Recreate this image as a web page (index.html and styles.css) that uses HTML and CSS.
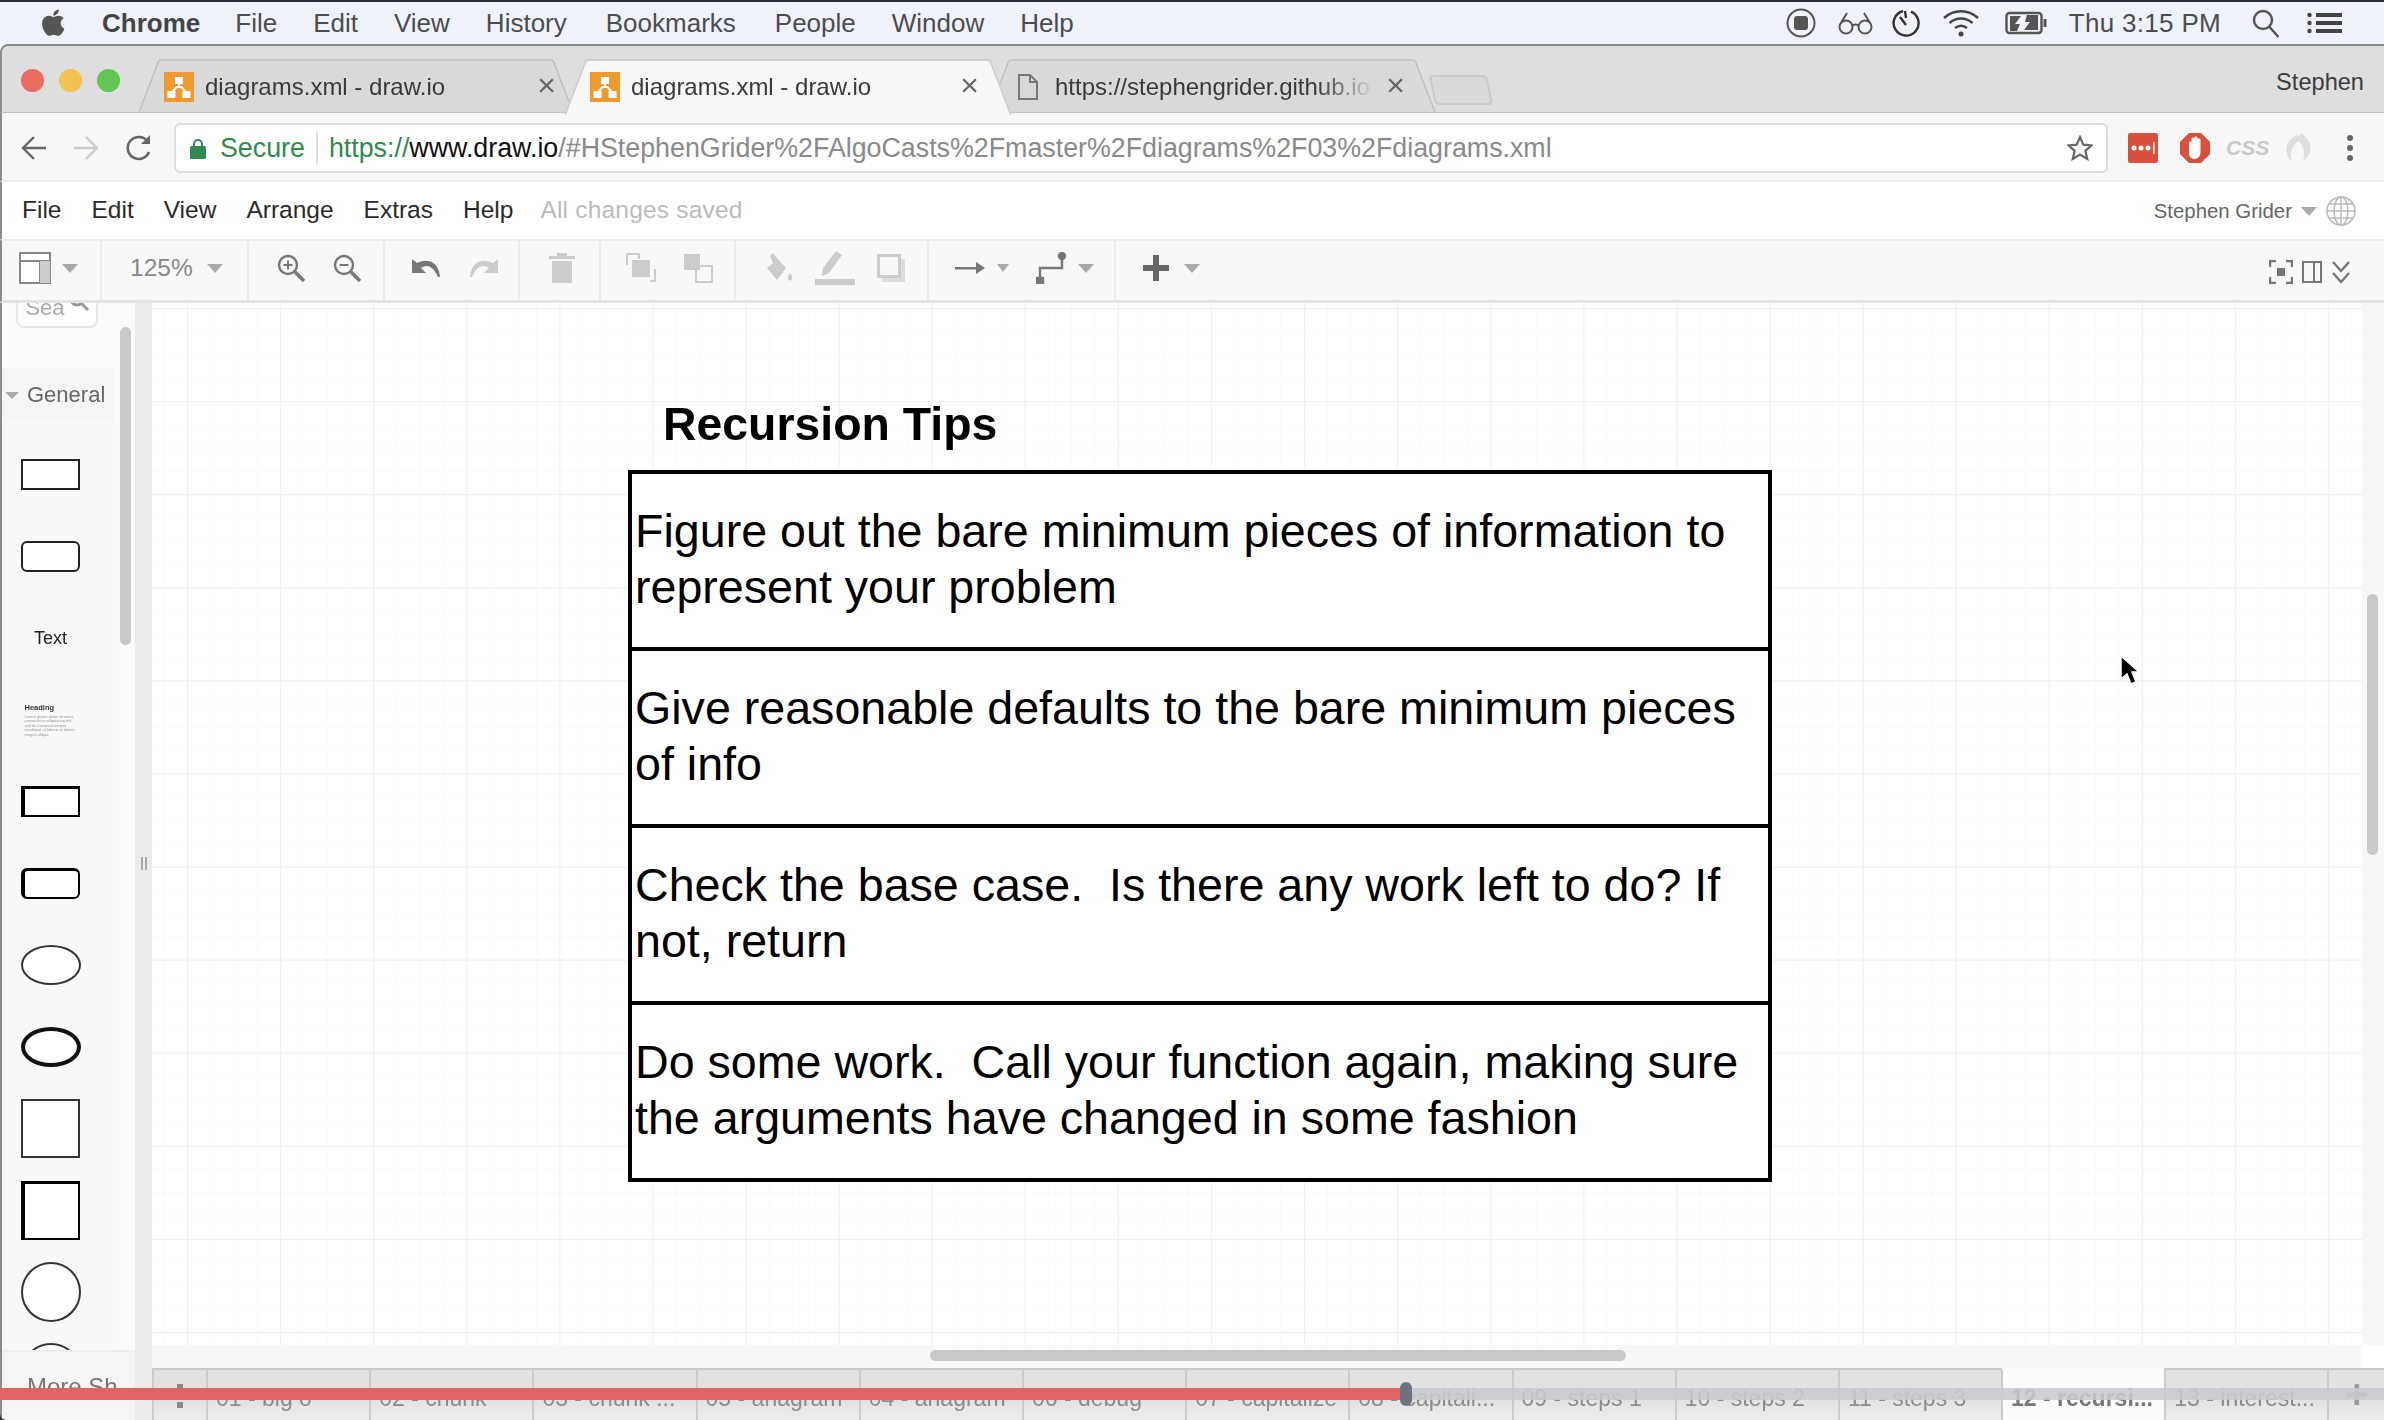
FILE: index.html
```html
<!DOCTYPE html>
<html lang="en">
<head>
<meta charset="UTF-8">
<title>diagrams.xml - draw.io</title>
<link rel="stylesheet" href="styles.css">
</head>
<body>
<div class="screen">

<!-- mac menu bar -->
<header class="menubar">
  <svg class="apple" viewBox="3 3 17 18.5" width="25" height="28"><path fill="#555" d="M17.05 20.28c-.98.95-2.05.8-3.08.35-1.09-.46-2.09-.48-3.24 0-1.44.62-2.2.44-3.06-.35C2.79 15.25 3.51 7.59 9.05 7.31c1.35.07 2.29.74 3.08.8 1.18-.24 2.31-.93 3.57-.84 1.51.12 2.65.72 3.4 1.8-3.12 1.87-2.38 5.98.48 7.13-.57 1.5-1.31 2.99-2.54 4.09zM12.03 7.25c-.15-2.23 1.66-4.07 3.74-4.25.29 2.58-2.34 4.5-3.74 4.25z"/></svg>
  <b class="mac-app">Chrome</b>
  <nav class="mac-menu">
    <span>File</span><span>Edit</span><span>View</span><span>History</span><span class="wide">Bookmarks</span><span class="wide">People</span><span>Window</span><span>Help</span>
  </nav>
  <div class="status">
    <svg width="30" height="30" viewBox="0 0 30 30"><circle cx="15" cy="15" r="13.5" fill="none" stroke="#555" stroke-width="2"/><rect x="8" y="8" width="14" height="14" rx="3" fill="#555"/></svg>
    <svg class="st-glasses" width="35" height="24" viewBox="0 0 35 24" fill="none" stroke="#555" stroke-width="2"><circle cx="8" cy="16" r="6.5"/><circle cx="27" cy="16" r="6.5"/><path d="M14 15c2-2 5-2 7 0M3 12L9 2M32 12L26 2"/></svg>
    <svg width="28" height="32" viewBox="0 0 28 32" fill="none" stroke="#333" stroke-width="2.4"><path d="M11 4a12.5 12.5 0 1 0 8 .6M13 4l1 7M8 10l6 8"/></svg>
    <svg width="38" height="28" viewBox="0 0 38 28" fill="none" stroke="#444" stroke-width="2.4"><path d="M2 9c10-9 24-9 34 0M7.500 14c7-6 16-6 23 0M13 19c4-3 8-3 12 0"/><circle cx="19" cy="25" r="2.500" fill="#444" stroke="none"/></svg>
    <svg class="st-battery" width="43" height="24" viewBox="0 0 43 24"><rect x="1.500" y="2" width="35" height="20" rx="3" fill="none" stroke="#555" stroke-width="2.400"/><rect x="38.500" y="8" width="3" height="8" fill="#555"/><path fill="#555" d="M5 5h11l-6 8h5l-3 7H5zM22 4h11v15H19l6-8h-5z"/></svg>
    <span class="clock">Thu 3:15 PM</span>
    <svg class="mac-search" width="28" height="30" viewBox="0 0 28 30" fill="none" stroke="#555" stroke-width="2.400"><circle cx="11" cy="12" r="9"/><path d="M17.500 19l9 10"/></svg>
    <svg class="mac-list" width="35" height="22" viewBox="0 0 35 22" fill="#444"><circle cx="2.500" cy="3" r="2.200"/><circle cx="2.500" cy="11" r="2.200"/><circle cx="2.500" cy="19" r="2.200"/><rect x="9" y="1" width="26" height="4"/><rect x="9" y="9" width="26" height="4"/><rect x="9" y="17" width="26" height="4"/></svg>
  </div>
</header>

<!-- chrome tab strip -->
<div class="tabstrip">
  <div class="lights"><i class="red"></i><i class="yellow"></i><i class="green"></i></div>
  <div class="tab first">
    <svg class="favicon" width="30" height="30" viewBox="0 0 30 30"><rect width="30" height="30" fill="#ee9a2e"/><path d="M15 10v5M7.500 21l5-6h5l5 6" fill="none" stroke="#fff" stroke-width="2"/><rect x="11" y="5" width="8" height="7" fill="#fff"/><rect x="3.500" y="19" width="8" height="7" fill="#fff"/><rect x="18.500" y="19" width="8" height="7" fill="#fff"/></svg>
    <span class="tab-title">diagrams.xml - draw.io</span>
    <span class="tab-close">×</span>
  </div>
  <div class="tab active">
    <svg class="favicon" width="30" height="30" viewBox="0 0 30 30"><rect width="30" height="30" fill="#ee9a2e"/><path d="M15 10v5M7.500 21l5-6h5l5 6" fill="none" stroke="#fff" stroke-width="2"/><rect x="11" y="5" width="8" height="7" fill="#fff"/><rect x="3.500" y="19" width="8" height="7" fill="#fff"/><rect x="18.500" y="19" width="8" height="7" fill="#fff"/></svg>
    <span class="tab-title">diagrams.xml - draw.io</span>
    <span class="tab-close">×</span>
  </div>
  <div class="tab third">
    <svg class="favicon" width="20" height="26" viewBox="0 0 20 26" fill="none" stroke="#777" stroke-width="2"><path d="M1 1h11l7 7v17H1zM12 1v7h7"/></svg>
    <span class="tab-title fade">https://stephengrider.github.io</span>
    <span class="tab-close">×</span>
  </div>
  <div class="newtab"></div>
  <span class="profile">Stephen</span>
</div>

<!-- address bar -->
<div class="addressbar">
  <svg class="nav-back" width="26" height="26" viewBox="0 0 26 26" fill="none" stroke="#666" stroke-width="2.400"><path d="M25 13H3M13 2L2 13l11 11"/></svg>
  <svg class="nav-forward" width="26" height="26" viewBox="0 0 26 26" fill="none" stroke="#ccc" stroke-width="2.400"><path d="M1 13h22M13 2l11 11-11 11"/></svg>
  <svg class="nav-reload" width="28" height="28" viewBox="0 0 28 28" fill="none" stroke="#666" stroke-width="2.600"><path d="M24 18a11 11 0 1 1-1-10"/><path d="M25 1v9h-9" fill="#666" stroke="none"/></svg>
  <div class="omnibox">
    <svg width="16" height="21" viewBox="0 0 16 21"><path d="M4 9V6a4 4 0 0 1 8 0v3" fill="none" stroke="#2f8a50" stroke-width="2"/><rect y="8" width="16" height="13" rx="1.500" fill="#2f8a50"/></svg>
    <span class="secure">Secure</span>
    <span class="url"><span class="url-green">https://</span><span class="url-host">www.draw.io</span>/#HStephenGrider%2FAlgoCasts%2Fmaster%2Fdiagrams%2F03%2Fdiagrams.xml</span>
    <svg class="star" width="26" height="26" viewBox="0 0 26 26"><path d="M13 2l3.300 7.600 8.200.8-6.200 5.400 1.900 8.100L13 19.600l-7.200 4.300 1.900-8.100-6.200-5.400 8.200-.8z" fill="none" stroke="#666" stroke-width="2.200"/></svg>
  </div>
  <div class="extensions">
    <svg width="30" height="30" viewBox="0 0 30 30"><rect width="30" height="30" rx="2" fill="#d9503f"/><circle cx="6" cy="15" r="2.500" fill="#fff"/><circle cx="13" cy="15" r="2.500" fill="#fff"/><circle cx="20" cy="15" r="2.500" fill="#fff"/><rect x="25" y="9" width="1.500" height="12" fill="#fff"/></svg>
    <svg class="ext-stop" width="30" height="30" viewBox="0 0 30 30"><path d="M9 0h12l9 9v12l-9 9H9l-9-9V9z" fill="#d9503f"/><path d="M9 20V10c0-2 2.500-2 2.500 0V6c0-2 3-2 3 0V5c0-2 3-2 3 0v2c0-2 3-2 3 0v12c0 4-2.500 7-6 7s-5.500-3-5.500-6z" fill="#fff"/></svg>
    <span class="ext-css">CSS</span>
    <svg class="ext-swirl" width="30" height="32" viewBox="0 0 30 32" fill="#dedede"><path d="M14 3C3 8-1 20 9 30c-3-8 0-19 10-23z"/><path d="M18 1c10 6 14 20 2 28 2-7 2-15-6-21z"/></svg>
    <svg class="ext-more" width="8" height="28" viewBox="0 0 8 28" fill="#666"><circle cx="4" cy="4" r="3"/><circle cx="4" cy="14" r="3"/><circle cx="4" cy="24" r="3"/></svg>
  </div>
</div>

<!-- draw.io menu -->
<div class="appmenu">
  <span>File</span><span>Edit</span><span>View</span><span>Arrange</span><span>Extras</span><span>Help</span>
  <span class="saved">All changes saved</span>
  <div class="user">
    <span>Stephen Grider</span>
    <i class="caret"></i>
    <svg width="30" height="30" viewBox="0 0 30 30" fill="none" stroke="#bbb" stroke-width="1.500"><circle cx="15" cy="15" r="14"/><ellipse cx="15" cy="15" rx="7" ry="14"/><path d="M15 1v28M1 15h28M3 8h24M3 22h24"/></svg>
  </div>
</div>

<!-- draw.io toolbar -->
<div class="toolbar">
  <div class="tb-group g-panel">
    <svg width="32" height="32" viewBox="0 0 32 32"><rect x="1" y="1" width="30" height="30" fill="#fff" stroke="#888" stroke-width="2"/><path d="M1 9h30M21 9v22" stroke="#888" stroke-width="2"/><rect x="21" y="9" width="10" height="22" fill="#ccc"/></svg>
    <i class="caret"></i>
  </div>
  <div class="tb-group g-zoom"><span class="zoom-value">125%</span><i class="caret"></i></div>
  <div class="tb-group g-mag">
    <svg width="28" height="28" viewBox="0 0 28 28" fill="none" stroke="#777" stroke-width="2.400"><circle cx="11" cy="11" r="9"/><path d="M18 18l9 9" stroke-width="3.500"/><path d="M6.500 11h9M11 6.500v9" stroke-width="2"/></svg>
    <svg width="28" height="28" viewBox="0 0 28 28" fill="none" stroke="#777" stroke-width="2.400"><circle cx="11" cy="11" r="9"/><path d="M18 18l9 9" stroke-width="3.500"/><path d="M6.500 11h9" stroke-width="2"/></svg>
  </div>
  <div class="tb-group g-undo">
    <svg width="30" height="20" viewBox="0 0 30 20"><path fill="#777" d="M1 1v14h14l-5-5c5-4 12-3 17 9h2C28 5 18-1 6 5z"/></svg>
    <svg width="30" height="20" viewBox="0 0 30 20"><path fill="#ccc" d="M29 1v14H15l5-5c-5-4-12-3-17 9H1C2 5 12-1 24 5z"/></svg>
  </div>
  <div class="tb-group g-trash">
    <svg width="26" height="30" viewBox="0 0 26 30" fill="#ccc"><rect y="3" width="26" height="3"/><rect x="8" width="10" height="3"/><path d="M3 8h20v22H3z"/></svg>
  </div>
  <div class="tb-group g-order">
    <svg width="30" height="30" viewBox="0 0 30 30"><path d="M1 12V1h12v5M24 28h5V16" fill="none" stroke="#ccc" stroke-width="2"/><rect x="6" y="7" width="18" height="17" fill="#ccc"/></svg>
    <svg width="30" height="30" viewBox="0 0 30 30"><rect x="1" y="1" width="16" height="16" fill="#ccc"/><rect x="13" y="13" width="16" height="16" fill="#f8f8f8" stroke="#ccc" stroke-width="2"/><rect x="8" y="8" width="9" height="9" fill="#ccc"/></svg>
  </div>
  <div class="tb-group g-style">
    <svg width="28" height="30" viewBox="0 0 28 30" fill="#ccc"><path d="M8 0l3 4 10 11-9 12L2 15l6-5-3-7z"/><path d="M25 20c-2 3-3 4-2 6s3 2 4 0 0-3-2-6z"/></svg>
    <svg width="40" height="34" viewBox="0 0 40 34" fill="#ccc"><path d="M21 0l6 4-13 18-7 3 1-8z"/><rect y="28" width="40" height="6"/></svg>
    <svg width="28" height="28" viewBox="0 0 28 28"><rect x="5" y="5" width="23" height="23" fill="#ddd"/><rect x="1.500" y="1.500" width="21" height="21" fill="#f8f8f8" stroke="#ccc" stroke-width="3"/></svg>
  </div>
  <div class="tb-group g-edge">
    <svg width="30" height="14" viewBox="0 0 30 14" fill="#777"><rect y="6" width="22" height="2.500"/><path d="M21 1l9 6-9 6z"/></svg>
    <i class="caret small"></i>
    <svg class="waypoint" width="30" height="32" viewBox="0 0 30 32" fill="none" stroke="#777" stroke-width="2.400"><path d="M26 4v12H4v12"/><circle cx="26" cy="4" r="3" fill="#777"/><rect x="1" y="26" width="6" height="6" fill="#777"/></svg>
    <i class="caret"></i>
  </div>
  <div class="tb-group g-plus">
    <svg width="26" height="26" viewBox="0 0 26 26" fill="#666"><rect x="10" width="6" height="26"/><rect y="10" width="26" height="6"/></svg>
    <i class="caret"></i>
  </div>
  <div class="tb-right">
    <svg width="24" height="24" viewBox="0 0 24 24" fill="none" stroke="#777" stroke-width="2.500"><path d="M1 7V1h6M17 1h6v6M23 17v6h-6M7 23H1v-6"/><rect x="8" y="8" width="8" height="8" fill="#777" stroke="none"/></svg>
    <svg width="20" height="22" viewBox="0 0 20 22" fill="none" stroke="#777" stroke-width="2"><rect x="1" y="1" width="18" height="20"/><path d="M12 1v20"/></svg>
    <svg width="20" height="24" viewBox="0 0 20 24" fill="none" stroke="#777" stroke-width="2.400"><path d="M2 2l8 9 8-9M2 13l8 9 8-9"/></svg>
  </div>
</div>

<div class="workspace">

  <!-- shape palette -->
  <aside class="sidebar">
    <div class="palette">
      <div class="search"><span>Sea</span><svg width="20" height="20" viewBox="0 0 20 20" fill="none" stroke="#999" stroke-width="3"><circle cx="8" cy="6" r="6"/><path d="M12 10l7 7"/></svg></div>
      <div class="section"><i class="caret"></i><span>General</span></div>
      <div class="shapes">
        <div class="shape"><div class="s-rect"></div></div>
        <div class="shape"><div class="s-rect round"></div></div>
        <div class="shape"><span class="s-text">Text</span></div>
        <div class="shape"><div class="s-heading"><b>Heading</b><p>Lorem ipsum dolor sit amet, consectetur adipisicing elit, sed do eiusmod tempor incididunt ut labore et dolore magna aliqua</p></div></div>
        <div class="shape"><div class="s-rect thick"></div></div>
        <div class="shape"><div class="s-rect round thick"></div></div>
        <div class="shape"><div class="s-ellipse"></div></div>
        <div class="shape"><div class="s-ellipse thick"></div></div>
        <div class="shape"><div class="s-square"></div></div>
        <div class="shape"><div class="s-square thick"></div></div>
        <div class="shape"><div class="s-circle"></div></div>
        <div class="shape"><div class="s-circle"></div></div>
      </div>
      <div class="palette-thumb"></div>
    </div>
    <div class="more">More Sh...</div>
  </aside>
  <div class="splitter"><i></i></div>

  <div class="editor">
    <div class="canvas-row">
      <!-- the diagram sits free on the canvas -->
      <div class="canvas">
        <div class="title">Recursion Tips</div>
        <div class="table">
          <div class="row">Figure out the bare minimum pieces of information to represent your problem</div>
          <div class="row">Give reasonable defaults to the bare minimum pieces of info</div>
          <div class="row">Check the base case.&nbsp; Is there any work left to do? If not, return</div>
          <div class="row">Do some work.&nbsp; Call your function again, making sure the arguments have changed in some fashion</div>
        </div>
        <svg class="cursor" width="22" height="32" viewBox="0 0 22 32"><path d="M2 1v23l6-5 4 10 5-2-4-10h7z" fill="#000" stroke="#fff" stroke-width="1.500"/></svg>
      </div>
      <div class="vscroll"><div class="vthumb"></div></div>
    </div>
    <div class="hscroll"><div class="hthumb"></div></div>
    <div class="pages">
      <div class="page-menu"><i></i><i></i></div>
      <div class="page">01 - big o</div>
      <div class="page">02 - chunk</div>
      <div class="page">03 - chunk ...</div>
      <div class="page">05 - anagram</div>
      <div class="page">04 - anagram</div>
      <div class="page">06 - debug</div>
      <div class="page">07 - capitalize</div>
      <div class="page">08 - capitali...</div>
      <div class="page">09 - steps 1</div>
      <div class="page">10 - steps 2</div>
      <div class="page">11 - steps 3</div>
      <div class="page current">12 - recursi...</div>
      <div class="page">13 - interest...</div>
      <div class="page-add">+</div>
    </div>
  </div>
</div>

<!-- video player progress over the recording -->
<div class="progress">
  <div class="played"></div>
  <div class="knob"></div>
</div>
<div class="corner"></div>

</div>
</body>
</html>
```

FILE: styles.css
```css
* {
  box-sizing: border-box;
}

html, body {
  margin: 0;
  height: 100%;
  background: #fff;
}

svg {
  display: block;
  flex: none;
}

.screen {
  position: relative;
  width: 2384px;
  height: 1420px;
  overflow: hidden;
  display: flex;
  flex-direction: column;
  font-family: "Liberation Sans", Arial, sans-serif;
  color: #333;
  filter: blur(0.6px);
}

/* mac menu bar */
.menubar {
  height: 44px;
  flex: none;
  display: flex;
  align-items: center;
  padding: 0 42px 0 40px;
  background: #eff2f9;
  border-top: 2px solid #2a2f3a;
  font-size: 26px;
  color: #4c4c50;
}

.mac-app {
  margin-left: 37px;
  color: #444;
}

.mac-menu {
  display: flex;
  gap: 36px;
  margin-left: 35px;
}

.mac-menu .wide {
  margin-left: 3px;
}

.status {
  margin-left: auto;
  display: flex;
  align-items: center;
  gap: 22px;
}

.st-glasses {
  margin-right: -3px;
}

.st-battery {
  margin-left: 3px;
}

.clock {
  margin-left: -1px;
  letter-spacing: .3px;
}

.mac-search {
  margin-left: 9px;
}

.mac-list {
  margin-left: 5px;
}

/* chrome tabs */
.tabstrip {
  height: 69px;
  flex: none;
  display: flex;
  align-items: flex-end;
  background: #dedede;
  border-top: 2px solid #85878c;
  border-bottom: 1px solid #c4c4c4;
  border-left: 2px solid #8b8b8b;
  border-top-left-radius: 8px;
}

.lights {
  display: flex;
  gap: 15px;
  width: 136px;
  padding-left: 19px;
  align-self: flex-start;
  margin-top: 23px;
}

.lights i {
  width: 23px;
  height: 23px;
  border-radius: 50%;
}

.red { background: #ec6b60; }
.yellow { background: #f3c14f; }
.green { background: #62c655; }

.tab {
  position: relative;
  height: 53px;
  display: flex;
  align-items: center;
  padding-top: 2px;
  font-size: 24px;
  color: #3a3a3a;
}

.tab::before, .tab::after {
  content: "";
  position: absolute;
  top: 0;
  bottom: 0;
  width: 55%;
  background: #d9d9d9;
  border-top: 2px solid #c6c6c6;
  transform-origin: bottom;
  z-index: 0;
}

.tab::before {
  left: 0;
  border-left: 2px solid #c2c2c2;
  border-top-left-radius: 4px;
  transform: skewX(-21deg);
}

.tab::after {
  right: 0;
  border-right: 2px solid #c2c2c2;
  border-top-right-radius: 4px;
  transform: skewX(21deg);
}

.tab > * {
  position: relative;
  z-index: 1;
}

.tab.first {
  width: 436px;
  padding-left: 26px;
}

.tab.active {
  width: 448px;
  margin-left: -10px;
  padding-left: 26px;
  z-index: 2;
}

.tab.active::before, .tab.active::after {
  background: #f7f7f7;
  border-color: #cfcfcf;
  height: 54px;
}

.tab.third {
  width: 448px;
  margin-left: -24px;
  padding-left: 30px;
}

.tab-title {
  margin-left: 11px;
  white-space: nowrap;
}

.third .tab-title {
  margin-left: 17px;
}

.fade {
  width: 320px;
  overflow: hidden;
  -webkit-mask-image: linear-gradient(to right, #000 82%, transparent 100%);
  mask-image: linear-gradient(to right, #000 82%, transparent 100%);
}

.tab-close {
  position: absolute !important;
  right: 17px;
  top: 8px;
  font-size: 32px;
  line-height: 36px;
  color: #666;
}

.active .tab-close {
  right: 33px;
}

.third .tab-close {
  right: 31px;
}

.first .tab-close {
  right: 18px;
}

.newtab {
  width: 58px;
  height: 30px;
  margin: 0 0 7px -4px;
  background: #d9d9d9;
  border: 2px solid #cacaca;
  border-radius: 4px;
  transform: skewX(12deg);
}

.profile {
  margin-left: auto;
  align-self: flex-start;
  margin-top: 23px;
  margin-right: 20px;
  font-size: 23.6px;
  color: #3c3c3c;
}

/* address bar */
.addressbar {
  height: 69px;
  flex: none;
  display: flex;
  align-items: center;
  padding: 3px 0 0 19px;
  background: #f7f7f7;
  border-left: 2px solid #8b8b8b;
  border-bottom: 2px solid #ececec;
}

.nav-forward {
  margin-left: 26px;
}

.nav-reload {
  margin-left: 26px;
}

.omnibox {
  width: 1934px;
  height: 50px;
  margin-left: 21px;
  display: flex;
  align-items: center;
  padding-left: 14px;
  background: #fff;
  border: 2px solid #dcdcdc;
  border-radius: 6px;
  font-size: 26.8px;
}

.secure {
  margin-left: 14px;
  padding-right: 11px;
  border-right: 2px solid #ddd;
  color: #2f8a50;
  line-height: 32px;
}

.url {
  margin-left: 11px;
  color: #8a8a8a;
  white-space: nowrap;
}

.url-green { color: #2f8a50; }
.url-host { color: #111; }

.star {
  margin-left: auto;
  margin-right: 13px;
}

.extensions {
  display: flex;
  align-items: center;
  margin-left: 20px;
  gap: 23px;
}

.ext-stop {
  margin-left: -1px;
}

.ext-css {
  font: italic bold 21px "Liberation Sans", sans-serif;
  color: #c9c9c9;
  width: 29px;
  margin-left: -7px;
}

.ext-swirl {
  margin-left: 5px;
}

.ext-more {
  margin-left: 10px;
}

/* draw.io menu */
.appmenu {
  height: 57px;
  flex: none;
  display: flex;
  align-items: center;
  gap: 30px;
  padding: 0 0 1px 20px;
  background: #fff;
  border-left: 2px solid #8b8b8b;
  font-size: 24.5px;
  color: #2b2b2b;
}

.saved {
  margin-left: -3px;
  color: #bbb;
  letter-spacing: .2px;
}

.user {
  margin-left: auto;
  display: flex;
  align-items: center;
  gap: 9px;
  padding: 2px 28px 0 0;
  font-size: 20.4px;
  color: #666;
}

.caret {
  display: block;
  width: 0;
  height: 0;
  flex: none;
  border-left: 8px solid transparent;
  border-right: 8px solid transparent;
  border-top: 9px solid #aaa;
}

.caret.small {
  border-left-width: 6px;
  border-right-width: 6px;
  border-top-width: 8px;
}

/* draw.io toolbar */
.toolbar {
  height: 64px;
  flex: none;
  display: flex;
  align-items: stretch;
  background: #f8f8f8;
  border-top: 2px solid #ececec;
  border-left: 2px solid #8b8b8b;
  border-bottom: 3px solid #e3e3e3;
}

.tb-group {
  display: flex;
  align-items: center;
  padding-bottom: 5px;
  border-right: 2px solid #ebebeb;
}

.g-panel { width: 100px; padding-left: 17px; gap: 11px; }
.g-zoom { width: 147px; padding-left: 28px; gap: 14px; }
.g-mag { width: 136px; padding-left: 28px; gap: 28px; }
.g-undo { width: 135px; padding-left: 26px; gap: 28px; }
.g-trash { width: 81px; padding-left: 29px; }
.g-order { width: 135px; padding-left: 25px; gap: 27px; }
.g-style { width: 193px; padding-left: 29px; gap: 22px; }
.g-edge { width: 187px; padding-left: 26px; gap: 16px; }
.g-plus { padding-left: 27px; gap: 15px; border-right: 0; }

.g-edge .waypoint {
  margin-left: 11px;
}

.g-edge .caret {
  margin-left: -4px;
}

.zoom-value {
  font-size: 24.5px;
  color: #888;
}

.tb-right {
  margin-left: auto;
  padding: 2px 33px 0 0;
  display: flex;
  align-items: center;
  gap: 9px;
}

/* workspace */
.workspace {
  flex: 1;
  min-height: 0;
  display: flex;
}

.sidebar {
  width: 135px;
  flex: none;
  display: flex;
  flex-direction: column;
  background: #fbfbfb;
  border-left: 2px solid #8b8b8b;
}

.palette {
  position: relative;
  flex: 1;
  min-height: 0;
  overflow: hidden;
}

.search {
  width: 82px;
  height: 25px;
  margin-left: 14px;
  display: flex;
  align-items: flex-end;
  justify-content: center;
  gap: 4px;
  padding-bottom: 13px;
  background: #fff;
  border: 2px solid #e8e8e8;
  border-top: 0;
  border-radius: 0 0 8px 8px;
  font-size: 22px;
  line-height: 10px;
  color: #aaa;
  overflow: hidden;
}

.section {
  width: 111px;
  height: 54px;
  margin-top: 40px;
  display: flex;
  align-items: center;
  gap: 8px;
  padding-left: 3px;
  background: #f5f5f7;
  font-size: 22px;
  color: #666;
}

.section .caret {
  border-left-width: 7px;
  border-right-width: 7px;
  border-top-width: 7px;
}

.shapes {
  width: 111px;
  padding-top: 12px;
  background: #f8f8fa;
}

.shape {
  height: 81.7px;
  display: flex;
  align-items: center;
  justify-content: center;
  padding-right: 14px;
}

.s-rect {
  width: 59px;
  height: 31px;
  background: #fff;
  border: 2px solid #222;
}

.s-rect.round {
  border-radius: 6px;
}

.s-rect.thick, .s-square.thick {
  border-top-width: 3px;
  border-left-width: 4px;
  border-color: #000;
}

.s-text {
  font-size: 18px;
  color: #222;
}

.s-heading {
  width: 52px;
  color: #333;
}

.s-heading b {
  display: block;
  font-size: 7.500px;
  font-weight: bold;
}

.s-heading p {
  margin: 3px 0 0;
  font-size: 4px;
  line-height: 4.500px;
  color: #999;
}

.s-ellipse {
  width: 60px;
  height: 40px;
  background: #fff;
  border: 2px solid #333;
  border-radius: 50%;
}

.s-ellipse.thick {
  border-width: 4px;
  border-color: #111;
}

.s-square {
  width: 59px;
  height: 59px;
  background: #fff;
  border: 2px solid #333;
}

.s-circle {
  width: 60px;
  height: 60px;
  flex: none;
  background: #fff;
  border: 2px solid #333;
  border-radius: 50%;
}

.palette-thumb {
  position: absolute;
  left: 118px;
  top: 24px;
  width: 11px;
  height: 318px;
  border-radius: 6px;
  background: #c9c9c9;
}

.more {
  height: 70px;
  flex: none;
  padding: 21px 0 0 25px;
  background: #f5f5f5;
  border-top: 2px solid #eee;
  font-size: 24px;
  color: #777;
  white-space: nowrap;
}

.splitter {
  width: 17px;
  flex: none;
  position: relative;
  background: #ebebeb;
}

.splitter i {
  position: absolute;
  left: 6px;
  top: 554px;
  width: 6px;
  height: 13px;
  border-left: 2px solid #aaa;
  border-right: 2px solid #aaa;
}

.editor {
  flex: 1;
  min-width: 0;
  display: flex;
  flex-direction: column;
}

.canvas-row {
  flex: 1;
  min-height: 0;
  display: flex;
}

.canvas {
  position: relative;
  flex: 1;
  min-width: 0;
  background-color: #fff;
  background-image:
    linear-gradient(#f0f0f0 1px, transparent 1px),
    linear-gradient(90deg, #f0f0f0 1px, transparent 1px),
    linear-gradient(#fafafa 1px, transparent 1px),
    linear-gradient(90deg, #fafafa 1px, transparent 1px);
  background-size: 93.1px 93.1px, 93.1px 93.1px, 23.275px 23.275px, 23.275px 23.275px;
  background-position: 0 5px, 35px 0, 0 5px, 35px 0;
}

.title {
  position: absolute;
  left: 511px;
  top: 94px;
  font-size: 46.4px;
  font-weight: bold;
  color: #000;
  white-space: nowrap;
}

.table {
  position: absolute;
  left: 476px;
  top: 167px;
  width: 1144px;
  height: 712px;
  display: flex;
  flex-direction: column;
  background: #fff;
  border: 4px solid #000;
}

.row {
  flex: 1;
  display: flex;
  align-items: center;
  padding: 0 3px 3px;
  font-size: 46.6px;
  line-height: 56px;
  color: #000;
  border-bottom: 4px solid #000;
}

.row:last-child {
  border-bottom: 0;
}

.cursor {
  position: absolute;
  left: 1967px;
  top: 352px;
}

.vscroll {
  position: relative;
  width: 22px;
  flex: none;
  background: #f7f7f7;
}

.vthumb {
  position: absolute;
  left: 5px;
  top: 291px;
  width: 11px;
  height: 261px;
  border-radius: 6px;
  background: #c9c9c9;
}

.hscroll {
  position: relative;
  height: 23px;
  flex: none;
  background: linear-gradient(to right, #f8f8f8 2209px, #fff 2209px);
}

.hthumb {
  position: absolute;
  left: 778px;
  top: 5px;
  width: 696px;
  height: 11px;
  border-radius: 6px;
  background: #c9c9c9;
}

.pages {
  height: 52px;
  flex: none;
  display: flex;
  font-size: 23px;
  color: #8c8c8c;
  white-space: nowrap;
}

.page-menu, .page, .page-add {
  background: linear-gradient(#e2e2e2 60%, #ededed);
  border-top: 2px solid #c9c9c9;
  border-left: 2px solid #cbcbcb;
}

.page-menu {
  width: 54px;
  display: flex;
  flex-direction: column;
  align-items: center;
  gap: 12px;
  padding-top: 14px;
}

.page-menu i {
  width: 6px;
  height: 6px;
  background: #888;
}

.page {
  width: 163.2px;
  padding: 15px 0 0 8px;
  overflow: hidden;
}

.page.current {
  background: #fbfbfb;
  border-top-color: #fbfbfb;
  font-weight: bold;
  color: #777;
}

.page-add {
  flex: 1;
  text-align: center;
  font-size: 40px;
  line-height: 48px;
  font-weight: bold;
  color: #999;
}

/* video progress */
.progress {
  position: absolute;
  left: 0;
  right: 0;
  top: 1388px;
  height: 12px;
  background: rgba(200, 202, 208, .88);
}

.played {
  width: 1403px;
  height: 12px;
  background: rgba(224, 96, 96, .96);
}

.knob {
  position: absolute;
  left: 1400px;
  top: -6px;
  width: 12px;
  height: 24px;
  border-radius: 6px;
  background: #6d7380;
}

.corner {
  position: absolute;
  left: 0;
  bottom: 0;
  width: 5px;
  height: 5px;
  background: radial-gradient(circle at 100% 0, transparent 4px, #333 5px);
}
```
